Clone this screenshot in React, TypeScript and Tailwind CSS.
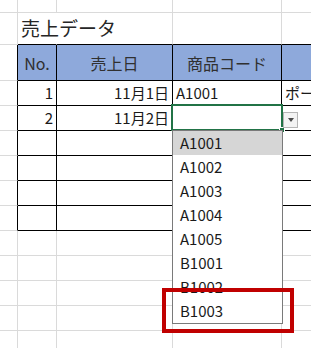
const COLS = [18, 39, 116, 109, 120]
const ROWS = [13, 32, 36, 25, 25, 25, 25, 25, 25, 25, 25, 25, 25, 25]

const HEADERS = ['', 'No.', '売上日', '商品コード', '']
const DATA: Record<number, string[]> = {
  3: ['', '1', '11月1日', 'A1001', 'ポー'],
  4: ['', '2', '11月2日', '', ''],
}

const ITEMS = ['A1001', 'A1002', 'A1003', 'A1004', 'A1005', 'B1001', 'B1002', 'B1003']

const font = { fontFamily: '"Noto Sans CJK JP", "Noto Sans", sans-serif' }

const isTableRow = (r: number) => r >= 2 && r <= 8

const Cell = ({ r, c }: { r: number; c: number }) => {
  const inTable = isTableRow(r) && c >= 1
  // right border: black inside the table and on its left edge, hidden where the title overflows
  let right = 'border-r-[#dadada]'
  if (inTable || (c === 0 && isTableRow(r))) right = 'border-r-black'
  if (r === 1 && c === 1) right = 'border-r-white'
  const bottom = inTable || (r === 1 && c >= 1) ? 'border-b-black' : 'border-b-[#dadada]'

  let content: React.ReactNode = null
  if (r === 1 && c === 1) {
    content = (
      <span className="relative z-10 whitespace-nowrap pl-[3px] text-[19px] text-[#262626]">売上データ</span>
    )
  } else if (r === 2 && c >= 1) {
    content = <span className="w-full text-center text-[16px] text-[#303030]">{HEADERS[c]}</span>
  } else if (DATA[r] && c >= 1) {
    const text = DATA[r][c]
    content =
      c <= 2 ? (
        <span className="w-full pr-[3px] text-right text-[15px] text-[#1a1a1a]">{text}</span>
      ) : (
        <span className="w-full whitespace-nowrap pl-[3px] text-left text-[15px] text-[#1a1a1a]">{text}</span>
      )
  }

  return (
    <div
      className={`flex shrink-0 items-center border-r border-b ${right} ${bottom} ${
        r === 2 && c >= 1 ? 'bg-[#8ea9db]' : r === 1 ? 'bg-transparent' : 'bg-white'
      } ${r === 1 && c === 1 ? 'overflow-visible' : 'overflow-hidden'}`}
      style={{ width: COLS[c], height: ROWS[r] }}
    >
      {content}
    </div>
  )
}

export default function App() {
  return (
    <div className="relative h-[348px] w-[311px] overflow-hidden bg-white" style={font}>
      {ROWS.map((_, r) => (
        <div key={r} className="flex">
          {COLS.map((__, c) => (
            <Cell key={c} r={r} c={c} />
          ))}
        </div>
      ))}

      {/* active cell */}
      <div className="absolute left-[171px] top-[104px] h-[27px] w-[112px] border-2 border-[#217346]" />
      <div className="absolute left-[279px] top-[127px] h-[6px] w-[6px] border border-white bg-[#217346]" />

      {/* dropdown button */}
      <div className="absolute left-[283px] top-[112px] flex h-[16px] w-[15px] items-center justify-center border border-[#b5b5b5] bg-[#f3f3f3]">
        <div className="h-0 w-0 border-x-[3.5px] border-t-[4px] border-x-transparent border-t-[#4a4a4a]" />
      </div>

      {/* list */}
      <div className="absolute left-[172px] top-[130px] w-[111px] border border-[#7a7a7a] bg-white">
        {ITEMS.map((item, i) => (
          <div
            key={item}
            className={`flex h-[24px] items-center pl-[7px] text-[15px] text-[#1a1a1a] ${i === 0 ? 'bg-[#d6d6d6]' : ''}`}
          >
            {item}
          </div>
        ))}
      </div>

      {/* highlight */}
      <div className="absolute left-[162px] top-[288px] h-[45px] w-[132px] border-4 border-[#c00000]" />
    </div>
  )
}
